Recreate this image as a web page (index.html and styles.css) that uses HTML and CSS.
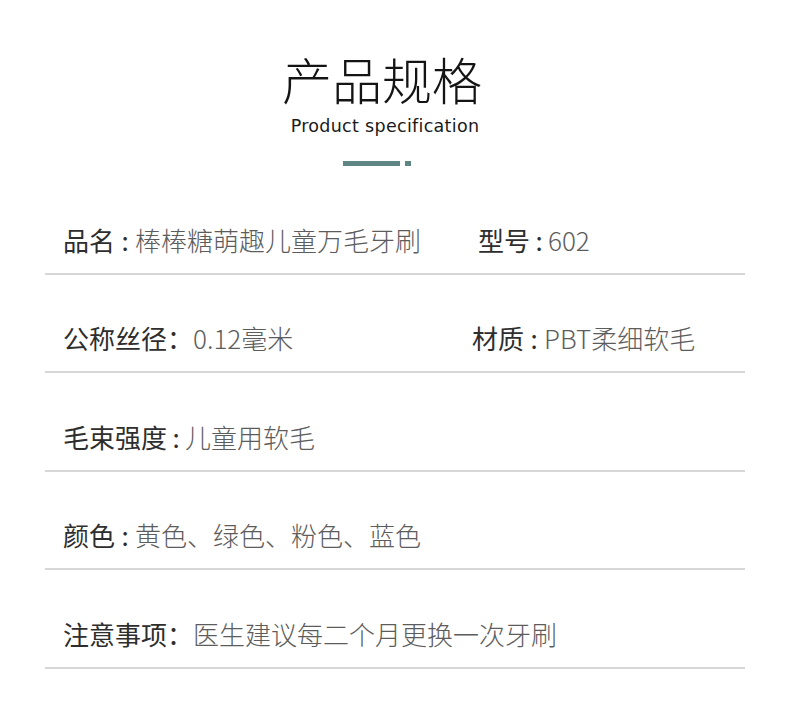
FILE: index.html
```html
<!DOCTYPE html>
<html lang="zh-CN">
  <head>
    <meta charset="UTF-8" />
    <meta name="viewport" content="width=device-width, initial-scale=1.0" />
    <title>产品规格</title>
    <link rel="stylesheet" href="styles.css">
  </head>
  <body>
    <div class="spec">
      <div class="spec-head">
        <h1>产品规格</h1>
        <p class="subtitle">Product specification</p>
        <div class="bar">
          <span class="bar-long"></span>
          <span class="bar-dot"></span>
        </div>
      </div>

      <ul class="spec-list">
        <li class="row">
          <div class="cell">
            <span class="key">品名<span class="colon narrow">:</span></span>
            <span class="val">棒棒糖萌趣儿童万毛牙刷</span>
          </div>
          <div class="cell cell-2 shift">
            <span class="key">型号<span class="colon narrow n18">:</span></span>
            <span class="val">602</span>
          </div>
        </li>
        <li class="row">
          <div class="cell">
            <span class="key">公称丝径<span class="colon">：</span></span>
            <span class="val">0.12毫米</span>
          </div>
          <div class="cell cell-2">
            <span class="key">材质<span class="colon narrow">:</span></span>
            <span class="val">PBT柔细软毛</span>
          </div>
        </li>
        <li class="row">
          <div class="cell">
            <span class="key">毛束强度<span class="colon narrow n18">:</span></span>
            <span class="val">儿童用软毛</span>
          </div>
        </li>
        <li class="row">
          <div class="cell">
            <span class="key">颜色<span class="colon narrow">:</span></span>
            <span class="val">黄色、绿色、粉色、蓝色</span>
          </div>
        </li>
        <li class="row">
          <div class="cell">
            <span class="key">注意事项<span class="colon">：</span></span>
            <span class="val">医生建议每二个月更换一次牙刷</span>
          </div>
        </li>
      </ul>
    </div>
  </body>
</html>
```

FILE: styles.css
```css
:root {
  --title-color: #141414;
  --key-color: #2e2e2e;
  --val-color: #5c5c5c;
  --line-color: #d6d6d6;
  --accent: #5f8585;
}

* {
  margin: 0;
  padding: 0;
  box-sizing: border-box;
}

body {
  background-color: #fff;
  font-family: 'Noto Sans CJK SC', 'Noto Sans', sans-serif;
}

.spec {
  width: 700px;
  margin-left: 45px;
}

/* 标题 */
.spec-head {
  display: flex;
  flex-direction: column;
  align-items: center;
  padding: 53px 26px 0 0;
  height: 176px;
}

h1 {
  font-size: 50px;
  line-height: 50px;
  font-weight: 300;
  color: var(--title-color);
}

.subtitle {
  margin-top: 12px;
  font-family: 'DejaVu Sans', sans-serif;
  font-size: 17.5px;
  line-height: 22px;
  letter-spacing: 0.3px;
  color: #1a1a1a;
  padding-left: 6px;
}

.bar {
  display: flex;
  gap: 5px;
  margin-top: 24px;
  margin-right: 10px;
}

.bar-long {
  width: 57px;
  height: 5px;
  background-color: var(--accent);
}

.bar-dot {
  width: 6px;
  height: 5px;
  background-color: var(--accent);
}

/* 参数列表 */
.spec-list {
  list-style: none;
}

.row {
  display: flex;
  padding: 51px 0 20px 18px;
  border-bottom: 2px solid var(--line-color);
  height: 98.5px;
}

.cell {
  display: flex;
  align-items: center;
  font-size: 26px;
  line-height: 26px;
  white-space: nowrap;
  width: 409px;
}

.cell-2 {
  width: auto;
}

.shift {
  padding-left: 6px;
}

.key {
  color: var(--key-color);
  font-weight: 400;
}

.colon {
  display: inline-block;
}

.colon.narrow {
  width: 20px;
  text-align: center;
}

.colon.n18 {
  width: 18px;
}

.val {
  color: var(--val-color);
  font-weight: 300;
}
```
